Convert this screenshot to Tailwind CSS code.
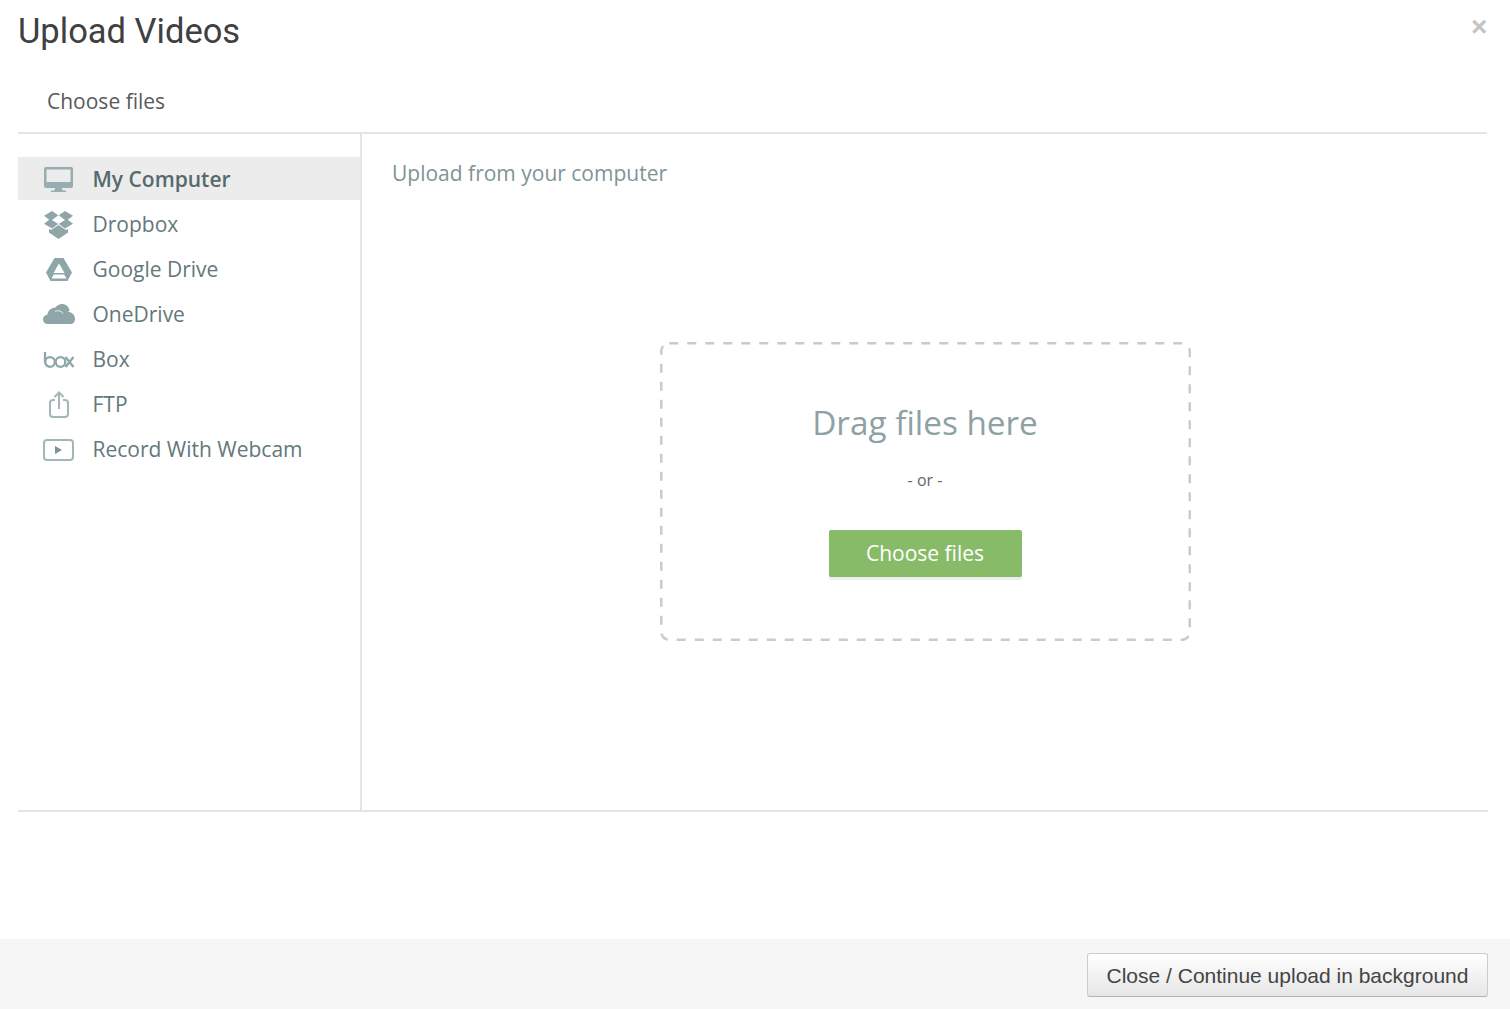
<!DOCTYPE html>
<html><head><meta charset="utf-8"><script src="https://cdn.jsdelivr.net/npm/@tailwindcss/browser@4"></script></head>
<body class="bg-white">
<div class="relative w-[1510px] h-[1009px] overflow-hidden flex flex-col bg-white font-['Open_Sans',sans-serif]">
  <span class="absolute left-[1471px] top-[11px] text-[28px] leading-[32px] font-bold text-[#c4c4c4] font-['Liberation_Sans',sans-serif]">×</span>
  <header class="ml-[18px] mr-[23px] h-[134px] shrink-0 border-b-2 border-[#e5e5e5] flex flex-col">
    <h1 class="pt-[10px] h-[70px] text-[34.500px] leading-[42px] text-[#404040] font-['Roboto',sans-serif]">Upload Videos</h1>
    <div class="pl-[29px] pt-[17px] text-[21px] leading-[28px] text-[#5a5a5a]">Choose files</div>
  </header>
  <main class="ml-[18px] mr-[22px] h-[678px] shrink-0 border-b-2 border-[#e5e5e5] flex">
    <nav class="w-[344px] shrink-0 border-r-2 border-[#e5e5e5] pt-[23px] text-[21px] text-[#64787a]">
      <div class="h-[43px] mb-[2px] pt-[2px] bg-[#ececec] flex items-center font-semibold text-[#556a6c]">
        <span class="w-[74.500px] shrink-0 flex justify-center pl-[7px]"><svg width="29" height="25" viewBox="0 0 29 25" fill="#98adaf"><path d="M2 0h25a2 2 0 0 1 2 2v17a2 2 0 0 1-2 2H18l.5 2.500H22V25H7v-1.500h3.500L11 21H2a2 2 0 0 1-2-2V2a2 2 0 0 1 2-2zm.5 2.500V15h24V2.500z" fill-rule="evenodd"/></svg></span>My Computer</div>
      <div class="h-[43px] mb-[2px] pt-[2px] flex items-center">
        <span class="w-[74.500px] shrink-0 flex justify-center pl-[7px]"><svg width="29" height="28" viewBox="0 0 29 28" fill="#8fa6a8"><path d="M8 0l6.300 4.200L8 8.900 14.300 13 8 17.500 0 12.800l5.200-4L0 4.700zM21 0l8 4.700-5.200 4.100 5.200 4-8 4.700-6.300-4.500L21 8.900l-6.300-4.700zM7 19l7.500-5 7.500 5 2-1.200v3.700L14.500 28 5 21.500v-3.700z"/></svg></span>Dropbox</div>
      <div class="h-[43px] mb-[2px] pt-[2px] flex items-center">
        <span class="w-[74.500px] shrink-0 flex justify-center pl-[7px]"><svg width="26" height="23" viewBox="0 0 26 23" fill="#8fa6a8"><path d="M8.500 0h9L26 14.500 21.500 23h-17L0 14.500zM13 5.500L7.500 15h11zM7.800 16.500l-2.300 4h15l-2.300-4z" fill-rule="evenodd"/></svg></span>Google Drive</div>
      <div class="h-[43px] mb-[2px] pt-[2px] flex items-center">
        <span class="w-[74.500px] shrink-0 flex justify-center pl-[7px]"><svg class="-mt-[2px]" width="32" height="20" viewBox="0 0 32 20" fill="#8fa6a8"><path d="M4.500 20C2 20 0 18 0 15.500 0 13 1.800 11 4.300 10.800 5 6.500 8.500 3.500 12.500 3.500 14 1.300 16.500 0 19 0c3.700 0 6.800 2.500 7.500 6.200 .2 0-1 .8-1.300 1.600C29 8.500 32 11 32 15c0 3-2 5-4.500 5z"/><path d="M12 7.500c1.500-1 6-1.500 8 2" fill="none" stroke="#fff" stroke-width=".8"/></svg></span>OneDrive</div>
      <div class="h-[43px] mb-[2px] pt-[2px] flex items-center">
        <span class="w-[74.500px] shrink-0 flex justify-center pl-[7px]"><svg width="32" height="16" viewBox="0 0 32 16" fill="none" stroke="#8fa6a8" stroke-width="2.300"><path d="M2 0v10"/><circle cx="7" cy="10" r="4.800"/><circle cx="17.500" cy="10" r="4.800"/><path d="M22.500 5l8 10M30.500 5l-8 10"/></svg></span>Box</div>
      <div class="h-[43px] mb-[2px] pt-[2px] flex items-center">
        <span class="w-[74.500px] shrink-0 flex justify-center pl-[7px]"><svg width="20" height="27" viewBox="0 0 20 27" fill="none" stroke="#a3b6b8" stroke-width="2"><path d="M6 9H4a3 3 0 0 0-3 3v11a3 3 0 0 0 3 3h12a3 3 0 0 0 3-3V12a3 3 0 0 0-3-3h-2M10 18V1.500M5.500 6L10 1.500 14.500 6"/></svg></span>FTP</div>
      <div class="h-[43px] pt-[2px] flex items-center">
        <span class="w-[74.500px] shrink-0 flex justify-center pl-[7px]"><svg width="31" height="22" viewBox="0 0 31 22" fill="none" stroke="#a3b6b8" stroke-width="2"><rect x="1" y="1" width="29" height="20" rx="3"/><path d="M12 7l7 4-7 4z" fill="#7d9496" stroke="none"/></svg></span>Record With Webcam</div>
    </nav>
    <section class="flex-1 flex flex-col items-center">
      <h2 class="self-start pl-[30px] pt-[23px] text-[21px] leading-[32px] text-[#7f9496]">Upload from your computer</h2>
      <div class="relative mt-[153px] w-[531px] h-[299px] flex flex-col items-center">
        <svg class="absolute inset-0" width="531" height="299" fill="none"><rect x="1.250" y="1.250" width="528.500" height="296.500" rx="8" stroke="#cbcbcb" stroke-width="2.500" stroke-dasharray="9 9"/></svg>
        <div class="mt-[57px] text-[33.300px] leading-[46px] text-[#8ea1a3]">Drag files here</div>
        <div class="mt-[24px] text-[16px] leading-[22px] text-[#666]">- or -</div>
        <button class="mt-[39px] w-[193px] h-[47px] bg-[#88bb67] rounded-[2px] text-white text-[21px] shadow-[0_3px_0_#eeeeee]">Choose files</button>
      </div>
    </section>
  </main>
  <div class="flex-1"></div>
  <footer class="h-[70px] shrink-0 bg-[#f6f6f6] flex justify-end items-start pt-[14px] pr-[22px]">
    <button class="w-[401px] h-[44px] pt-[1px] rounded-[3px] border border-[#cccccc] border-b-[#b3b3b3] bg-linear-to-b from-white to-[#e6e6e6] text-[21px] text-[#444] font-['Liberation_Sans',sans-serif]">Close / Continue upload in background</button>
  </footer>
</div>
</body></html>
